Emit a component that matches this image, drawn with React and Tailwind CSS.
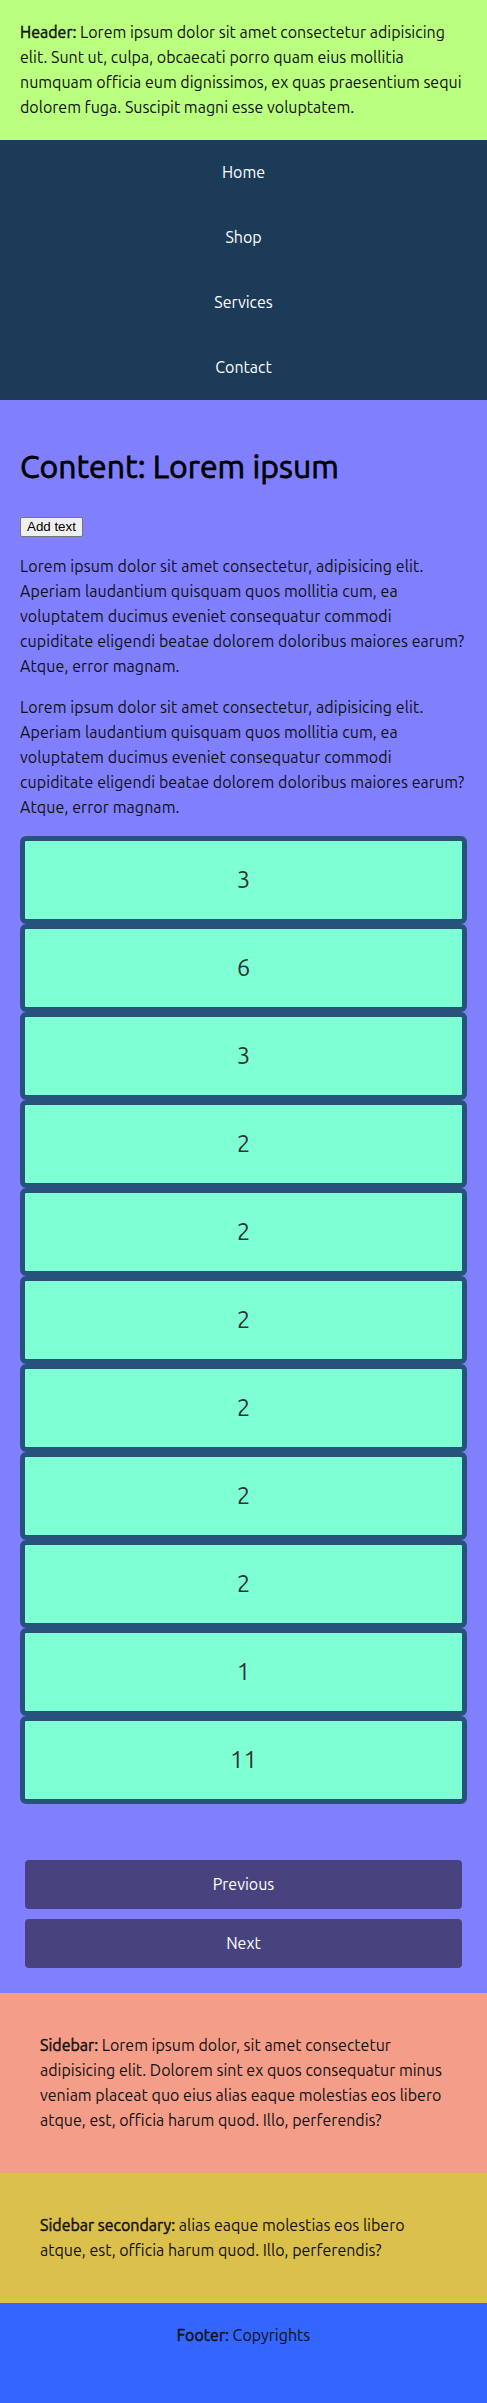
import React, { useState } from 'react';

const font = "font-['Ubuntu','Lato','Liberation_Sans',sans-serif]";
// the reference bolds by thickening the regular face, so the widths stay regular
const fauxBold = 'font-normal [-webkit-text-stroke:0.45px_currentColor]';

export default function App() {
  const [items] = useState([3, 6, 3, 2, 2, 2, 2, 2, 2, 1, 11]);
  const [paras, setParas] = useState([0, 1]);

  const lorem =
    'Lorem ipsum dolor sit amet consectetur, adipisicing elit. Aperiam laudantium quisquam quos mollitia cum, ea voluptatem ducimus eveniet consequatur commodi cupiditate eligendi beatae dolorem doloribus maiores earum? Atque, error magnam.';

  return (
    <div className={`${font} text-base leading-[1.5625] text-[#111]`}>
      <header className="bg-[#bbff80] p-5">
        <p>
          <b className={fauxBold}>Header:</b> Lorem ipsum dolor sit amet consectetur adipisicing elit. Sunt ut, culpa,
          obcaecati porro quam eius mollitia numquam officia eum dignissimos, ex quas praesentium sequi dolorem fuga.
          Suscipit magni esse voluptatem.
        </p>
      </header>

      <nav className="bg-[#1b3b58]">
        <ul className="flex flex-col">
          {['Home', 'Shop', 'Services', 'Contact'].map((label) => (
            <li key={label}>
              <a href="#" className="block py-5 text-center text-white">
                {label}
              </a>
            </li>
          ))}
        </ul>
      </nav>

      <main className="bg-[#8080ff] p-5">
        <h1 className="my-[21.44px] text-[32px] font-normal text-black [-webkit-text-stroke:0.8px_black]">
          Content: Lorem ipsum
        </h1>
        <div>
          <button
            className="rounded-[2px] border border-[#767676] bg-[#efefef] px-[6px] py-[1px] font-['Liberation_Sans',Arial,sans-serif] text-[13.33px] leading-[16px] text-black"
            onClick={() => setParas([...paras, paras.length])}
          >
            Add text
          </button>
        </div>
        {paras.map((p) => (
          <p key={p} className="my-4 tracking-[0.08px]">
            {lorem}
          </p>
        ))}

        <div className="flex flex-col">
          {items.map((n, i) => (
            <div
              key={i}
              className="flex h-[88px] items-center justify-center rounded-[6px] border-[5px] border-[#27527a] bg-[#7fffd4] text-2xl text-[#333]"
            >
              {n}
            </div>
          ))}
        </div>

        <div className="flex flex-col gap-[10px] px-[5px] pt-[56px] pb-[5px]">
          <button className="h-[49px] rounded-[4px] bg-[#48437f] text-white">Previous</button>
          <button className="h-[49px] rounded-[4px] bg-[#48437f] text-white">Next</button>
        </div>
      </main>

      <aside className="bg-[#f49e8a] p-10">
        <p>
          <b className={fauxBold}>Sidebar:</b> Lorem ipsum dolor, sit amet consectetur adipisicing elit. Dolorem sint
          ex quos consequatur minus veniam placeat quo eius alias eaque molestias eos libero atque, est, officia harum
          quod. Illo, perferendis?
        </p>
      </aside>

      <aside className="bg-[#dcc04c] p-10">
        <p>
          <b className={fauxBold}>Sidebar secondary:</b> alias eaque molestias eos libero atque, est, officia harum
          quod. Illo, perferendis?
        </p>
      </aside>

      <footer className="h-[100px] bg-[#3366ff] pt-5 text-center">
        <p>
          <b className={fauxBold}>Footer:</b> Copyrights
        </p>
      </footer>
    </div>
  );
}
